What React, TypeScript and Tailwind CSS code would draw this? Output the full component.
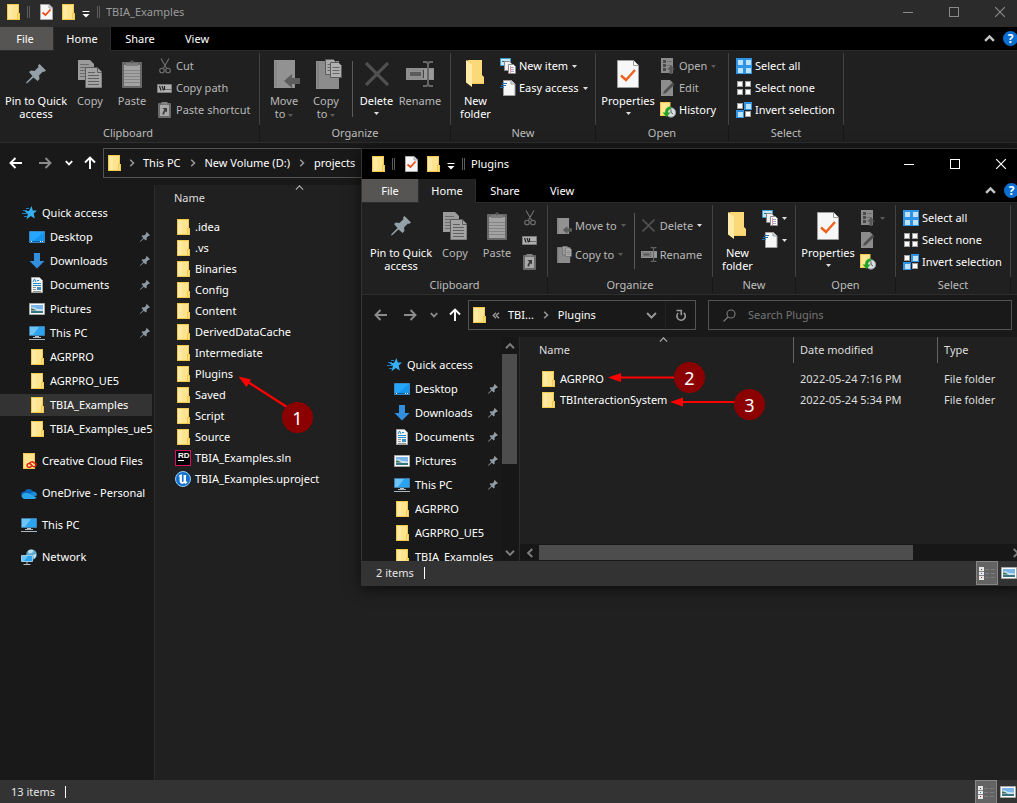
import type { ReactNode } from "react";

/* ---------- icons ---------- */

function Folder() {
  return (
    <svg width="13" height="16" viewBox="0 0 13 16" className="shrink-0" shapeRendering="crispEdges">
      <path d="M0 0h12v9h1v7H0z" fill="#f2c94a" />
      <path d="M1 1h10v8h-1v6H1z" fill="#ffe48f" />
      <path d="M1 1h4v14H1z" fill="#ffe9a3" />
      <path d="M11 10h1v5h-1z" fill="#ffe08a" />
    </svg>
  );
}

function CheckDoc({ large = false }: { large?: boolean }) {
  return large ? (
    <svg width="22" height="28" viewBox="0 0 22 28">
      <path d="M.5.5h16l5 5v22H.5z" fill="#f7f7f7" stroke="#9c9c9c" />
      <path d="M16.5.5v5h5" fill="#fff" stroke="#9c9c9c" />
      <path d="M4 15.500l5 4.500 9-10" fill="none" stroke="#f0621d" strokeWidth="2.400" />
    </svg>
  ) : (
    <svg width="13" height="16" viewBox="0 0 13 16">
      <path d="M.5.5h8.500l3.500 3.500v11.500H.5z" fill="#f7f7f7" stroke="#a8a8a8" />
      <path d="M9 .5V4h3.500" fill="#ddd" stroke="#a8a8a8" />
      <path d="M2.500 8.500l3 2.500 5-5.500" fill="none" stroke="#e8501d" strokeWidth="1.800" />
    </svg>
  );
}

const PIN =
  "M13.500 0L20 6.500 18 8 17 7.500 13 11.500 13.500 15 11.500 17 7.500 13.500 1.500 19 0 19.500.500 18 6.500 12 3 8 5 6.500 8.500 7 12.500 3 12 1.500z";

function Pin({ large = false }: { large?: boolean }) {
  return (
    <svg width={large ? 20 : 10} height={large ? 20 : 10} viewBox="0 0 20 20" className="shrink-0">
      <path d={PIN} fill={large ? "#93a0a8" : "#8f9ba3"} />
    </svg>
  );
}

function CopyIcon() {
  return (
    <svg width="24" height="28" viewBox="0 0 24 28">
      <path d="M0 0h12l4 4v16H0z" fill="#9b9b9b" />
      <path d="M2 4.500h9M2 7.500h12M2 10.500h12M2 13.500h12M2 16.500h12" stroke="#6c6c6c" />
      <path d="M7.500 7.500h12l4.500 4.500v16H7.500z" fill="#a4a4a4" stroke="#5c5c5c" />
      <path d="M19.500 8v4.500H24" fill="none" stroke="#5c5c5c" />
      <path d="M10 12.500h7M10 15.500h11M10 18.500h11M10 21.500h11M10 24.500h11" stroke="#606060" />
    </svg>
  );
}

function PasteIcon() {
  return (
    <svg width="20" height="28" viewBox="0 0 20 28">
      <rect y="2" width="20" height="26" rx="1" fill="#686868" />
      <path d="M2 5h16v21H2z" fill="#a3a3a3" />
      <path d="M2 10.500h16M2 13.500h16M2 16.500h16M2 19.500h16M2 22.500h16" stroke="#858585" />
      <path d="M4 3h4a2 2 0 0 1 4 0h4v3H4z" fill="#7c7c7c" />
      <circle cx="10" cy="1.800" r="1.500" fill="#555" />
    </svg>
  );
}

function CutIcon() {
  return (
    <svg width="16" height="16" viewBox="0 0 16 16" fill="none" stroke="#707070" strokeWidth="1.100">
      <path d="M4 0.500L10 11M12 0.500L6 11" />
      <circle cx="5" cy="12.500" r="2.300" />
      <circle cx="11" cy="12.500" r="2.300" />
    </svg>
  );
}

function CopyPathIcon() {
  return (
    <svg width="16" height="16" viewBox="0 0 16 16">
      <path d="M.5 4.500h14v8H.5z" fill="#b0b0b0" stroke="#7b7b7b" />
      <path d="M2.500 6l1.500 4.500M5 6l1.500 4.500M7.500 6v4" stroke="#222" strokeWidth="1.200" />
      <path d="M8.500 9.500h1M10.500 9.500h1M12.500 9.500h1" stroke="#222" />
    </svg>
  );
}

function PasteShortcutIcon() {
  return (
    <svg width="16" height="16" viewBox="0 0 16 16">
      <rect x="1" y="1" width="13" height="15" rx="1" fill="#6a6a6a" />
      <path d="M3 3h9v11H3z" fill="#a9a9a9" />
      <path d="M4.500 0h6v2.500h-6z" fill="#838383" />
      <path d="M5.500 6H10v4.500L8.700 9.200C7.700 10 7.200 11 7.300 12.500H5.500c0-2 .6-3.400 1.900-4.600z" fill="#3a3a3a" />
    </svg>
  );
}

function MoveToIcon({ small = false }: { small?: boolean }) {
  return (
    <svg width={small ? 15 : 32} height={small ? 16 : 28} viewBox={small ? "0 0 26 28" : "-6 0 32 28"}>
      <path d="M0 0h21v28H0z" fill="#929292" />
      <path d="M2 1v26" stroke="#7e7e7e" />
      <path d="M10 21l8-7v4h8v6h-8v4z" fill="#5c5c5c" />
    </svg>
  );
}

function CopyToIcon({ small = false }: { small?: boolean }) {
  return (
    <svg width={small ? 15 : 32} height={small ? 17 : 30} viewBox={small ? "0 0 26 30" : "-6 0 32 30"}>
      <path d="M0 2h23v28H0z" fill="#8c8c8c" />
      <path d="M2 3v26" stroke="#777" />
      <path d="M9.500.5h8l3 3v12h-11z" fill="#aaa" stroke="#5c5c5c" />
      <path d="M11.500 5.500h5M11.500 8.500h5M11.500 11.500h5" stroke="#666" />
      <path d="M14.500 3.500h8l3 3v12h-11z" fill="#b0b0b0" stroke="#5c5c5c" />
      <path d="M16.500 8.500h7M16.500 11.500h7M16.500 14.500h7" stroke="#666" />
    </svg>
  );
}

function DeleteIcon({ small = false }: { small?: boolean }) {
  return (
    <svg width={small ? 13 : 24} height={small ? 13 : 24} viewBox="0 0 24 24">
      <path d="M1 1l22 22M23 1L1 23" stroke="#505050" strokeWidth="3.200" />
    </svg>
  );
}

function RenameIcon({ small = false }: { small?: boolean }) {
  return (
    <svg width={small ? 16 : 28} height={small ? 15 : 26} viewBox="0 0 28 26">
      <path d="M1 8h26v10H1z" fill="#454545" stroke="#8f8f8f" strokeWidth="2" />
      <path d="M3 10h13v6H3z" fill="#5a5a5a" stroke="#a3a3a3" strokeWidth="1.500" />
      <path d="M18 8h9v10h-9z" fill="#9a9a9a" />
      <path d="M17 1h3.500L22 2.500 23.500 1H27M22 2.500v21M17 25h3.500l1.500-1.500 1.500 1.500H27" fill="none" stroke="#666" strokeWidth="2" />
    </svg>
  );
}

function NewFolderIcon() {
  return (
    <svg width="19" height="28" viewBox="0 0 19 28">
      <path d="M0 2l2-2h14v16l2 2v6H4z" fill="#f5c860" />
      <path d="M2 0h14v15l2 2v6H6V5z" fill="#fbd978" />
      <path d="M0 0l6 4.500V27l-6-4.500z" fill="#ffeaa8" />
    </svg>
  );
}

function NewItemIcon() {
  return (
    <svg width="16" height="16" viewBox="0 0 16 16">
      <path d="M.5.5h10v7H.5z" fill="#c8e6f8" stroke="#3d9bd0" />
      <path d="M2 3.500h3M6 3.500h3" stroke="#22628f" />
      <path d="M4.500 3.500h5l2 2v7h-7z" fill="#eee" stroke="#8a8a8a" />
      <path d="M8.500 6.500h5l2 2v7h-7z" fill="#fff" stroke="#8a8a8a" />
      <path d="M10 9.500h4M10 11.500h4M10 13.500h4" stroke="#a9a1d6" />
      <path d="M10.500 8v7" stroke="#e69a9a" />
    </svg>
  );
}

function EasyAccessIcon() {
  return (
    <svg width="16" height="16" viewBox="0 0 16 16">
      <path d="M3.500.5h8l3.500 3.500v11.500H3.500z" fill="#f7f7f7" stroke="#a0a0a0" />
      <path d="M11 .5V4h4" fill="#ddd" stroke="#a0a0a0" />
      <path d="M2 3.500h5M1 5.500h5M0 7.500h4" stroke="#1e6fb8" />
    </svg>
  );
}

function OpenIcon() {
  return (
    <svg width="14" height="16" viewBox="0 0 14 16">
      <path d="M0 0h12v15H0z" fill="#8b8b8b" />
      <path d="M2 2h3v3H2zM2 6h3v3H2zM2 10h3v3H2z" fill="#4b4b4b" />
      <path d="M6 3.500h5M6 7.500h5" stroke="#6b6b6b" />
      <path d="M10 7.500l4 4h-2.500V16h-3v-4.500H6z" fill="#585858" />
    </svg>
  );
}

function EditIcon() {
  return (
    <svg width="14" height="16" viewBox="0 0 14 16">
      <path d="M0 0h9l3 3v13H0z" fill="#8d8d8d" />
      <path d="M2 14l1-3 8.500-8.500 2 2L5 13z" fill="#505050" />
    </svg>
  );
}

function HistoryIcon() {
  return (
    <svg width="16" height="16" viewBox="0 0 16 16">
      <path d="M0 0h10.500v14H0z" fill="#f3c94f" />
      <path d="M1 1h8.500v12H1z" fill="#ffe793" />
      <circle cx="11" cy="10.500" r="4.700" fill="#d9dde0" stroke="#8e979e" />
      <path d="M11 7.500v3l2 1.500" stroke="#555" fill="none" />
      <path d="M11 4.500c-4 0-6 2.500-6 6H2.500L6.500 15l4-4.500H8c0-2 1-3 3-3.500z" fill="#25a325" />
    </svg>
  );
}

function SelectIcon({ on }: { on: [boolean, boolean, boolean, boolean] }) {
  const spots = [
    [0, 0],
    [8, 0],
    [0, 8],
    [8, 8],
  ];
  return (
    <svg width="16" height="16" viewBox="0 0 16 16" shapeRendering="crispEdges">
      {spots.map(([x, y], i) =>
        on[i] ? (
          <g key={i}>
            <rect x={x} y={y} width="8" height="8" fill="#2f93e6" />
            <rect x={x + 2} y={y + 2} width="5" height="5" fill="#bfe2fb" />
          </g>
        ) : (
          <g key={i}>
            <rect x={x + 1} y={y + 1} width="6" height="6" fill="#a0a0a0" />
            <rect x={x + 2} y={y + 2} width="4" height="4" fill="#fff" />
          </g>
        ),
      )}
    </svg>
  );
}

function QuickStar() {
  return (
    <svg width="16" height="14" viewBox="0 0 16 14" className="shrink-0">
      <path d="M9.500 0l1.300 4.500H15l-3.300 3 1.100 5-4-2.600-4.300 3.300 1.400-5.300L2.500 5H7z" fill="#35b0f5" />
      <path d="M1 4.500h4M0 7.500h5M2 10.500h3M4 2.500h3" stroke="#1b7fc4" />
    </svg>
  );
}

function DesktopIcon() {
  return (
    <svg width="16" height="16" viewBox="0 0 16 16" className="shrink-0">
      <path d="M.5 2.500h15v11H.5z" fill="#1496ee" stroke="#3a86c0" />
      <path d="M1 3h14L3 13H1z" fill="#25a6fb" />
      <path d="M1 12.500h14" stroke="#0b5fa5" />
      <path d="M2 12.500h1M11 12.500h1M13 12.500h1" stroke="#fff" />
    </svg>
  );
}

function DownloadIcon() {
  return (
    <svg width="16" height="16" viewBox="0 0 16 16" className="shrink-0">
      <path d="M5 0h6v8h4.500L8 15.500.5 8H5z" fill="#338fdd" />
    </svg>
  );
}

function DocumentIcon() {
  return (
    <svg width="16" height="16" viewBox="0 0 16 16" className="shrink-0">
      <path d="M2.500.5h8l3 3v12h-11z" fill="#f4f4f4" stroke="#a6a6a6" />
      <path d="M4 5l1.500-3L7 5M8 3.500h2M4 6.500h8M4 8.500h8" stroke="#2287cc" fill="none" />
      <path d="M4 10.500h3M4 12.500h3M4 14.500h8" stroke="#777" strokeWidth=".8" />
      <path d="M8 10h4v3H8z" fill="#3f8fc2" />
    </svg>
  );
}

function PictureIcon() {
  return (
    <svg width="16" height="12" viewBox="0 0 16 12" className="shrink-0">
      <path d="M.5.5h15v11H.5z" fill="#fff" stroke="#a9a9a9" />
      <path d="M2 2h12v8H2z" fill="#79b4ea" />
      <path d="M2 5c3-2 4 1 7 1l5 .500V8H2z" fill="#cfe4ef" />
      <path d="M2 5.500c2-.5 4 1 6 2H2z" fill="#3f6f57" />
      <path d="M2 8h12v2H2z" fill="#3b7284" />
    </svg>
  );
}

function PcIcon() {
  return (
    <svg width="16" height="16" viewBox="0 0 16 16" className="shrink-0">
      <path d="M.5 1.500h15v9H.5z" fill="#2ba3f0" stroke="#3f7ea8" />
      <path d="M1 2h9l-6 8H1z" fill="#6cc4f8" />
      <path d="M6 11h4v1.500H6z" fill="#b9c4cb" />
      <path d="M4 12.500h8M0 14.500h16" stroke="#a9b6bf" />
    </svg>
  );
}

function CreativeCloudIcon() {
  return (
    <svg width="16" height="16" viewBox="0 0 16 16" className="shrink-0">
      <path d="M2 0h12v16H2z" fill="#f2c94a" />
      <path d="M3 1h10v14H3z" fill="#ffe48f" />
      <path
        d="M10.500 13.300c-1.500 1.600-4.500 1.200-4.500-.9 0-2 2.300-2.500 3.800-1.100l2 1.900M8.500 10.500c.8-2 3.200-2.200 4.200-.7 2 0 2.800 1.300 2.300 2.700-.5 1.400-2 1.600-3.200.7l-1.800-1.500"
        fill="none"
        stroke="#d9200f"
        strokeWidth="1.400"
      />
    </svg>
  );
}

function OneDriveIcon() {
  return (
    <svg width="16" height="11" viewBox="0 0 16 11" className="shrink-0">
      <path d="M3.500 3.500a5 5 0 0 1 8.800.3L8 8H1C-.8 6 .5 3.500 3.500 3.500z" fill="#0a64b8" />
      <path d="M8 6l4.300-2.400c2.400 0 4 1.700 3.600 4L10 9z" fill="#1a8ad8" />
      <path d="M.5 7.500C2 5 5 3.800 8 5.600l7.600 4C14.900 10.700 14 11 13 11H4C2 11 .5 9.500.5 7.500z" fill="#2aa5ea" />
    </svg>
  );
}

function NetworkIcon() {
  return (
    <svg width="16" height="16" viewBox="0 0 16 16" className="shrink-0">
      <circle cx="10.500" cy="5.500" r="5.300" fill="#5ba9cf" />
      <path d="M7 2c2-2 5-1 5.500 0L11 4 8 4.500zM12 6l3-1c.5 2-.5 4-2 4.500z" fill="#c3dfea" />
      <path d="M.5 6.500h11v6H.5z" fill="#2ba3f0" stroke="#9cc9e3" />
      <path d="M1 7h6l-4 5H1z" fill="#6cc4f8" />
      <path d="M6 13v2M2.500 15.500h7" stroke="#b4c0c7" />
    </svg>
  );
}

function RiderIcon() {
  return (
    <span className="flex h-4 w-4 shrink-0 flex-col border border-[#d8125f] bg-black pl-0.5 font-['Liberation_Sans'] text-[8px] leading-[9px] font-bold text-white">
      RD
      <span className="h-px w-1.5 bg-white" />
    </span>
  );
}

function UnrealIcon() {
  return (
    <svg width="16" height="16" viewBox="0 0 16 16" className="shrink-0">
      <circle cx="8" cy="8" r="7.500" fill="#1272cf" stroke="#9ccbf2" />
      <path
        d="M3.300 5.300C4.300 3.900 5.400 3.400 7.200 3.200L6.900 4v6.300c0 .8.900 1 1.700.3V4.700L8.200 4h3.200l-.4.800v5.400l.8.700 1-.7c-.5 1.500-1.500 2.300-2.500 2.800l-1.200-1-1.500 1c-1.900-.5-3-1.500-3-3V6c0-.8-.5-1-1.300-.7z"
        fill="#fff"
      />
    </svg>
  );
}

function Tri({ dim = false }: { dim?: boolean }) {
  return (
    <svg width="5" height="3" viewBox="0 0 5 3" className="inline-block shrink-0 align-middle">
      <path d="M0 0h5L2.500 3z" fill={dim ? "#5a5a5a" : "#e0e0e0"} />
    </svg>
  );
}

type Dir = "left" | "right" | "up" | "down";
const TURN: Record<Dir, number> = { right: 0, down: 90, left: 180, up: 270 };

function Chevron({ dir, size = 8, color = "#9a9a9a", weight = 1.5 }: { dir: Dir; size?: number; color?: string; weight?: number }) {
  return (
    <svg width={size} height={size} viewBox="0 0 8 8" className="shrink-0">
      <path d="M2.200.800L5.500 4 2.200 7.200" fill="none" stroke={color} strokeWidth={weight} transform={`rotate(${TURN[dir]} 4 4)`} />
    </svg>
  );
}

function Arrow({ dir, color }: { dir: Dir; color: string }) {
  return (
    <svg width="14" height="14" viewBox="0 0 14 14">
      <path d="M1 7h11M7.500 2l5 5-5 5" fill="none" stroke={color} strokeWidth="1.900" transform={`rotate(${TURN[dir]} 7 7)`} />
    </svg>
  );
}

/* ---------- ribbon ---------- */

function BigButton({ icon, width, dim, menu, children }: { icon: ReactNode; width: string; dim?: boolean; menu?: boolean; children: ReactNode }) {
  return (
    <button className={`flex shrink-0 flex-col items-center pt-[7px] text-center leading-[13px] ${width} ${dim ? "text-[#b8b8b8]" : "text-white"}`}>
      <span className="mb-1 flex h-8 items-center justify-center">{icon}</span>
      <span>{children}</span>
      {menu && (
        <span className="flex h-3 items-center">
          <Tri />
        </span>
      )}
    </button>
  );
}

type SmallButtonProps = {
  icon: ReactNode;
  label: string;
  text?: boolean;
  dim?: boolean;
  menu?: boolean;
  menuDim?: boolean;
  tall?: boolean;
};

function SmallButton({ icon, label, text = true, dim, menu, menuDim, tall }: SmallButtonProps) {
  return (
    <button aria-label={label} className={`flex items-center whitespace-nowrap ${tall ? "h-[29px]" : "h-[22px]"} ${dim ? "text-[#b8b8b8]" : "text-white"}`}>
      <span className="mr-[3px] flex w-4 justify-center">{icon}</span>
      {text && <span>{label}</span>}
      {menu && (
        <span className={`flex ${text ? "ml-1" : "ml-px"}`}>
          <Tri dim={menuDim} />
        </span>
      )}
    </button>
  );
}

function Group({ label, width, children }: { label: string; width: string; children: ReactNode }) {
  return (
    <div className={`flex shrink-0 flex-col ${width}`}>
      <div className="mt-0.5 h-[72px] border-r border-[#434343]">
        <div className="-mt-0.5 flex">{children}</div>
      </div>
      <div className="h-4 border-r border-[#181818] text-center leading-4 text-[#bdbdbd]">{label}</div>
    </div>
  );
}

function Stack({ tall, children }: { tall?: boolean; children: ReactNode }) {
  return <div className={`flex flex-col items-start ${tall ? "pt-2" : "pt-1"}`}>{children}</div>;
}

function Ribbon({ compact }: { compact: boolean }) {
  return (
    <div className="flex h-[92px] shrink-0 border-b border-[#2e2e2e] bg-[#202020]">
      <Group label="Clipboard" width={compact ? "w-[186px]" : "w-[263px]"}>
        <BigButton width="ml-[3px] w-[72px]" icon={<Pin large />}>
          Pin to Quick access
        </BigButton>
        <BigButton width="w-9" dim icon={<CopyIcon />}>
          Copy
        </BigButton>
        <BigButton width="mr-px w-12" dim icon={<PasteIcon />}>
          Paste
        </BigButton>
        <Stack>
          <SmallButton dim text={!compact} label="Cut" icon={<CutIcon />} />
          <SmallButton dim text={!compact} label="Copy path" icon={<CopyPathIcon />} />
          <SmallButton dim text={!compact} label="Paste shortcut" icon={<PasteShortcutIcon />} />
        </Stack>
      </Group>
      {compact ? (
        <Group label="Organize" width="w-[165px]">
          <div className="flex pl-2">
            <Stack tall>
              <SmallButton tall dim menu menuDim label="Move to" icon={<MoveToIcon small />} />
              <SmallButton tall dim menu menuDim label="Copy to" icon={<CopyToIcon small />} />
            </Stack>
            <div className="mt-2.5 mr-1.5 ml-2 h-14 w-px bg-[#5a5a5a]" />
            <Stack tall>
              <SmallButton tall dim menu label="Delete" icon={<DeleteIcon small />} />
              <SmallButton tall dim label="Rename" icon={<RenameIcon small />} />
            </Stack>
          </div>
        </Group>
      ) : (
        <Group label="Organize" width="w-[191px]">
          <BigButton width="mx-1.5 w-9" dim icon={<MoveToIcon />}>
            Move to&nbsp;
            <Tri dim />
          </BigButton>
          <BigButton width="w-9" dim icon={<CopyToIcon />}>
            Copy to&nbsp;
            <Tri dim />
          </BigButton>
          <div className="mt-2.5 ml-2 h-14 w-px bg-[#5a5a5a]" />
          <BigButton width="w-[47px]" menu icon={<DeleteIcon />}>
            Delete
          </BigButton>
          <BigButton width="w-10" dim icon={<RenameIcon />}>
            Rename
          </BigButton>
        </Group>
      )}
      <Group label="New" width={compact ? "w-[83px]" : "w-[145px]"}>
        <BigButton width="w-[49px]" icon={<NewFolderIcon />}>
          New folder
        </BigButton>
        <Stack>
          <SmallButton menu text={!compact} label="New item" icon={<NewItemIcon />} />
          <SmallButton menu text={!compact} label="Easy access" icon={<EasyAccessIcon />} />
        </Stack>
      </Group>
      <Group label="Open" width={compact ? "w-[100px]" : "w-[133px]"}>
        <BigButton width="w-16" menu icon={<CheckDoc large />}>
          Properties
        </BigButton>
        <Stack>
          <SmallButton dim menu menuDim text={!compact} label="Open" icon={<OpenIcon />} />
          <SmallButton dim text={!compact} label="Edit" icon={<EditIcon />} />
          <SmallButton text={!compact} label="History" icon={<HistoryIcon />} />
        </Stack>
      </Group>
      <Group label="Select" width="w-[115px]">
        <div className="pl-[7px]">
          <Stack>
            <SmallButton label="Select all" icon={<SelectIcon on={[true, true, true, true]} />} />
            <SmallButton label="Select none" icon={<SelectIcon on={[false, false, false, false]} />} />
            <SmallButton label="Invert selection" icon={<SelectIcon on={[false, true, true, false]} />} />
          </Stack>
        </div>
      </Group>
    </div>
  );
}

/* ---------- window chrome ---------- */

function TitleBar({ title, active }: { title: string; active: boolean }) {
  const ink = active ? "#ffffff" : "#8a8a8a";
  const grip = <span className="h-3 w-[3px] shrink-0 border-x border-[#5c5c5c]" />;
  return (
    <header className={`flex h-[30px] shrink-0 items-center pl-2.5 ${active ? "bg-black text-white" : "bg-[#2b2b2b] text-[#9b9b9b]"}`}>
      <Folder />
      <span className="ml-[7px] flex">{grip}</span>
      <span className="ml-2.5 flex">
        <CheckDoc />
      </span>
      <span className="ml-[9px] flex">
        <Folder />
      </span>
      <svg width="8" height="7" viewBox="0 0 8 7" className="mt-1 ml-[7px]">
        <path d="M.500.5h7" stroke="#fff" />
        <path d="M.500 3h7L4 6.500z" fill="#fff" />
      </svg>
      <span className="ml-[7px] flex">{grip}</span>
      <h1 className="ml-1.5 flex-1">{title}</h1>
      <button aria-label="Minimize" className="flex h-full w-[46px] items-center justify-center">
        <span className="h-px w-2.5" style={{ background: ink }} />
      </button>
      <button aria-label="Maximize" className="flex h-full w-[46px] items-center justify-center">
        <span className="h-2.5 w-2.5 border" style={{ borderColor: ink }} />
      </button>
      <button aria-label="Close" className="flex h-full w-[46px] items-center justify-center">
        <svg width="10" height="10" viewBox="0 0 10 10">
          <path d="M0 0l10 10M10 0L0 10" stroke={ink} strokeWidth="1.200" />
        </svg>
      </button>
    </header>
  );
}

function Tabs() {
  return (
    <div className="flex h-6 shrink-0 items-stretch border-b border-[#2b2b2b] bg-black text-white">
      <button className="w-14 bg-[#575553]">File</button>
      <button className="-mb-px w-[58px] border-x border-[#2b2b2b] bg-[#202020]">Home</button>
      <button className="w-[58px]">Share</button>
      <button className="w-14">View</button>
      <div className="flex flex-1 items-center justify-end gap-2 pr-[5px]">
        <Chevron dir="up" size={11} color="#c4c4c4" weight={1.8} />
        <span className="flex h-[15px] w-[15px] items-center justify-center rounded-full bg-[#0a6fd0] text-[12px] leading-none font-bold">?</span>
      </div>
    </div>
  );
}

function AddressRow({ active, crumbs, elided, search }: { active: boolean; crumbs: string[]; elided?: boolean; search: string }) {
  const dim = "#8c8c8c";
  return (
    <div className="flex h-[42px] shrink-0 items-center bg-[#191919] pt-[5px] pr-3 pb-[7px] text-white">
      <button aria-label="Back" className="ml-1.5 flex w-[26px] justify-center">
        <Arrow dir="left" color={active ? dim : "#fff"} />
      </button>
      <button aria-label="Forward" className="ml-[3px] flex w-[26px] justify-center">
        <Arrow dir="right" color={dim} />
      </button>
      <button aria-label="Recent locations" className="ml-[3px] flex w-4 justify-center">
        <Chevron dir="down" color={active ? dim : "#fff"} weight={1.8} />
      </button>
      <button aria-label="Up" className="mr-1 ml-1 flex w-[18px] justify-center">
        <Arrow dir="up" color="#fff" />
      </button>
      <nav className="flex h-[30px] min-w-0 flex-1 items-center border border-[#535353] pl-1">
        <Folder />
        {elided ? (
          <span className="flex w-[22px] justify-center pr-0.5">
            <Chevron dir="left" size={7} />
            <span className="-ml-1 flex">
              <Chevron dir="left" size={7} />
            </span>
          </span>
        ) : (
          <span className="flex w-[22px] justify-center">
            <Chevron dir="right" />
          </span>
        )}
        {crumbs.map((c, i) => (
          <span key={c} className="flex shrink-0 items-center">
            {i > 0 && (
              <span className="flex w-6 justify-center">
                <Chevron dir="right" />
              </span>
            )}
            <button>{c}</button>
          </span>
        ))}
        <span className="flex-1" />
        <button aria-label="Previous locations" className="flex w-7 justify-center">
          <Chevron dir="down" size={11} weight={1.4} />
        </button>
        <button aria-label="Refresh" className="flex h-full w-[30px] items-center justify-center border-l border-[#222]">
          <svg width="12" height="13" viewBox="0 0 12 13" fill="none" stroke="#9a9a9a" strokeWidth="1.600">
            <path d="M3.200 4a4.200 4.200 0 1 0 5.600-.2M1.500 1.500h4.800v4.700" />
          </svg>
        </button>
      </nav>
      <label className="ml-3 flex h-[30px] w-[304px] shrink-0 items-center border border-[#535353] pl-3.5">
        <svg width="13" height="13" viewBox="0 0 13 13" fill="none" stroke="#7d7d7d" strokeWidth="1.100">
          <circle cx="8" cy="5" r="4" />
          <path d="M5 8L.5 12.500" />
        </svg>
        <input aria-label={search} placeholder={search} className="ml-3 min-w-0 flex-1 bg-transparent outline-none placeholder:text-[#757575]" />
      </label>
    </div>
  );
}

/* ---------- navigation pane ---------- */

const PINNED: [string, ReactNode][] = [
  ["Desktop", <DesktopIcon />],
  ["Downloads", <DownloadIcon />],
  ["Documents", <DocumentIcon />],
  ["Pictures", <PictureIcon />],
  ["This PC", <PcIcon />],
];
const RECENT = ["AGRPRO", "AGRPRO_UE5", "TBIA_Examples", "TBIA_Examples_ue5"];
const ROOTS: [string, ReactNode][] = [
  ["Creative Cloud Files", <CreativeCloudIcon />],
  ["OneDrive - Personal", <OneDriveIcon />],
  ["This PC", <PcIcon />],
  ["Network", <NetworkIcon />],
];

function NavPane({ selected, scroll }: { selected?: string; scroll?: boolean }) {
  const recent = scroll ? RECENT.slice(0, 3) : RECENT;
  const roots = scroll ? [] : ROOTS;
  return (
    <div className="flex w-[158px] shrink-0 overflow-hidden border-r border-[#2c2c2c] bg-[#191919] text-white">
      <nav className="flex min-w-0 flex-1 flex-col overflow-hidden pt-4 whitespace-nowrap">
        <a href="#quick" className="flex h-6 shrink-0 items-center gap-1 pl-[25px]">
          <QuickStar />
          Quick access
        </a>
        {PINNED.map(([name, icon]) => (
          <a key={name} href="#pinned" className="flex h-6 shrink-0 items-center gap-[5px] pr-1 pl-8">
            {icon}
            <span className="flex-1">{name}</span>
            <Pin />
          </a>
        ))}
        {recent.map((name) => (
          <a key={name} href="#recent" className={`my-px flex h-[22px] shrink-0 items-center gap-[5px] pl-8 ${name === selected ? "mr-0.5 bg-[#333333]" : ""}`}>
            <span className="flex w-4 shrink-0 justify-center">
              <Folder />
            </span>
            {name}
          </a>
        ))}
        {roots.map(([name, icon]) => (
          <a key={name} href="#root" className="mt-2 flex h-6 shrink-0 items-center gap-[5px] pl-6">
            {icon}
            {name}
          </a>
        ))}
      </nav>
      {scroll && (
        <div className="mr-0.5 flex w-[15px] shrink-0 flex-col items-center bg-[#171717]">
          <span className="flex h-[17px] items-center">
            <Chevron dir="up" size={10} color="#7d7d7d" weight={1.6} />
          </span>
          <span className="h-[49%] w-full bg-[#4d4d4d]" />
          <span className="flex-1" />
          <span className="flex h-[17px] items-center">
            <Chevron dir="down" size={10} color="#7d7d7d" weight={1.6} />
          </span>
        </div>
      )}
    </div>
  );
}

/* ---------- file list ---------- */

type Entry = { name: string; date?: string; kind?: string; icon?: ReactNode };

function FileList({ entries, details }: { entries: Entry[]; details?: boolean }) {
  return (
    <div className="flex min-w-0 flex-1 flex-col overflow-hidden bg-[#202020]">
      <div className="flex-1 pl-3.5">
        <table className={`table-fixed border-collapse text-left whitespace-nowrap ${details ? "w-[514px]" : "w-[260px]"}`}>
          <thead className="text-[#dedede]">
            <tr className="h-[31px] align-top">
              <th className="w-[260px] p-0 font-normal">
                <div className={`flex h-[26px] flex-col ${details ? "border-r border-[#636363]" : ""}`}>
                  <span className="flex h-[5px] items-center justify-center">
                    <Chevron dir="up" size={9} color="#b0b0b0" weight={1} />
                  </span>
                  <span className="pl-[5px] leading-4">Name</span>
                </div>
              </th>
              {details && (
                <>
                  <th className="w-36 p-0 font-normal">
                    <div className="h-[26px] border-r border-[#636363] pt-[5px] pl-1.5 leading-4">Date modified</div>
                  </th>
                  <th className="p-0 font-normal">
                    <div className="pt-[5px] pl-1.5 leading-4">Type</div>
                  </th>
                </>
              )}
            </tr>
          </thead>
          <tbody>
            {entries.map((e) => (
              <tr key={e.name} className="h-[21px]">
                <td className="p-0">
                  <span className="flex items-center gap-1 pl-1.5 text-white">
                    <span className="flex w-4 justify-center">{e.icon ?? <Folder />}</span>
                    {e.name}
                  </span>
                </td>
                {details && (
                  <>
                    <td className="p-0 pl-1.5 text-[#dedede]">{e.date}</td>
                    <td className="p-0 pl-1.5 text-[#dedede]">{e.kind}</td>
                  </>
                )}
              </tr>
            ))}
          </tbody>
        </table>
      </div>
      {details && (
        <div className="flex h-[17px] items-center border-y border-[#171717] bg-[#171717]">
          <span className="flex w-[19px] justify-center">
            <Chevron dir="left" size={10} color="#7d7d7d" weight={1.6} />
          </span>
          <span className="flex h-full flex-1">
            <span className="h-full w-4/5 bg-[#4d4d4d]" />
          </span>
          <span className="flex w-[17px] justify-center">
            <Chevron dir="right" size={10} color="#7d7d7d" weight={1.6} />
          </span>
        </div>
      )}
    </div>
  );
}

function StatusBar({ count }: { count: string }) {
  return (
    <footer className="flex h-6 shrink-0 items-center bg-[#333333] pl-3.5 text-[#e6e6e6]">
      <span>{count}</span>
      <span className="ml-2.5 h-3 w-px bg-white" />
      <span className="flex-1" />
      <button aria-label="Details view" className="flex h-full w-[22px] items-center justify-center border border-[#868686] bg-[#636363]">
        <svg width="16" height="13" viewBox="0 0 16 13" shapeRendering="crispEdges">
          <path d="M0 0h5v13H0z" fill="#e8e8e8" />
          <path d="M2 2h1v1H2z" fill="#444" />
          <path d="M2 6h1v1H2z" fill="#2b7bd6" />
          <path d="M2 10h1v1H2z" fill="#d02020" />
          <path d="M0 4.500h5M0 8.500h5" stroke="#8a8a8a" />
          <path d="M6 2.500h4M12 2.500h4M6 6.500h4M12 6.500h4M6 10.500h4M12 10.500h4" stroke="#7d7d7d" />
        </svg>
      </button>
      <button aria-label="Thumbnail view" className="mr-1 flex h-full w-[22px] items-center justify-center">
        <PictureIcon />
      </button>
    </footer>
  );
}

/* ---------- windows ---------- */

type ExplorerProps = {
  title: string;
  active: boolean;
  crumbs: string[];
  search: string;
  selected?: string;
  entries: Entry[];
  count: string;
  className: string;
};

function Explorer({ title, active, crumbs, search, selected, entries, count, className }: ExplorerProps) {
  return (
    <section className={`flex flex-col overflow-hidden bg-[#191919] ${className}`}>
      <TitleBar title={title} active={active} />
      <Tabs />
      <Ribbon compact={active} />
      <AddressRow active={active} crumbs={crumbs} elided={active} search={search} />
      <div className="flex min-h-0 flex-1">
        <NavPane selected={selected} scroll={active} />
        <FileList entries={entries} details={active} />
      </div>
      <StatusBar count={count} />
    </section>
  );
}

const PROJECT: Entry[] = [
  ...[".idea", ".vs", "Binaries", "Config", "Content", "DerivedDataCache", "Intermediate", "Plugins", "Saved", "Script", "Source"].map((name) => ({ name })),
  { name: "TBIA_Examples.sln", icon: <RiderIcon /> },
  { name: "TBIA_Examples.uproject", icon: <UnrealIcon /> },
];

const PLUGINS: Entry[] = [
  { name: "AGRPRO", date: "2022-05-24 7:16 PM", kind: "File folder" },
  { name: "TBInteractionSystem", date: "2022-05-24 5:34 PM", kind: "File folder" },
];

function Badge({ n, at }: { n: number; at: string }) {
  return (
    <span className={`absolute flex h-[31px] w-[31px] items-center justify-center rounded-full bg-[#8b0000] text-[18px] leading-none text-white ${at}`}>
      {n}
    </span>
  );
}

export default function App() {
  return (
    <main className="relative flex h-screen overflow-hidden bg-[#191919] font-['Noto_Sans','Open_Sans',sans-serif] text-[11px] leading-4">
      <Explorer
        className="-mt-[3px] -mr-1.5 -mb-px -ml-[3px] min-w-0 flex-1"
        title="TBIA_Examples"
        active={false}
        crumbs={["This PC", "New Volume (D:)", "projects"]}
        search="Search TBIA_Examples"
        selected="TBIA_Examples"
        entries={PROJECT}
        count="13 items"
      />
      <Explorer
        className="absolute top-[148px] -right-2 left-[361px] h-[438px] border border-[#333333] shadow-[0_3px_14px_rgba(0,0,0,0.6)]"
        title="Plugins"
        active
        crumbs={["TBI...", "Plugins"]}
        search="Search Plugins"
        entries={PLUGINS}
        count="2 items"
      />
      <svg width="560" height="60" viewBox="0 0 560 60" className="pointer-events-none absolute top-[370px] left-[230px]">
        <g stroke="#ff0000" strokeWidth="2.200">
          <path d="M18 12l42 27M388 7.500h56M450 32h60" />
        </g>
        <g fill="#ff0000">
          <path d="M8.500 6.500l12.500 3-4.500 7.500zM378 7.500l13-4.500v9zM440 32l13-4.500v9z" />
        </g>
      </svg>
      <Badge n={1} at="top-[402px] left-[282px]" />
      <Badge n={2} at="top-[362px] left-[674px]" />
      <Badge n={3} at="top-[389px] left-[734px]" />
    </main>
  );
}
